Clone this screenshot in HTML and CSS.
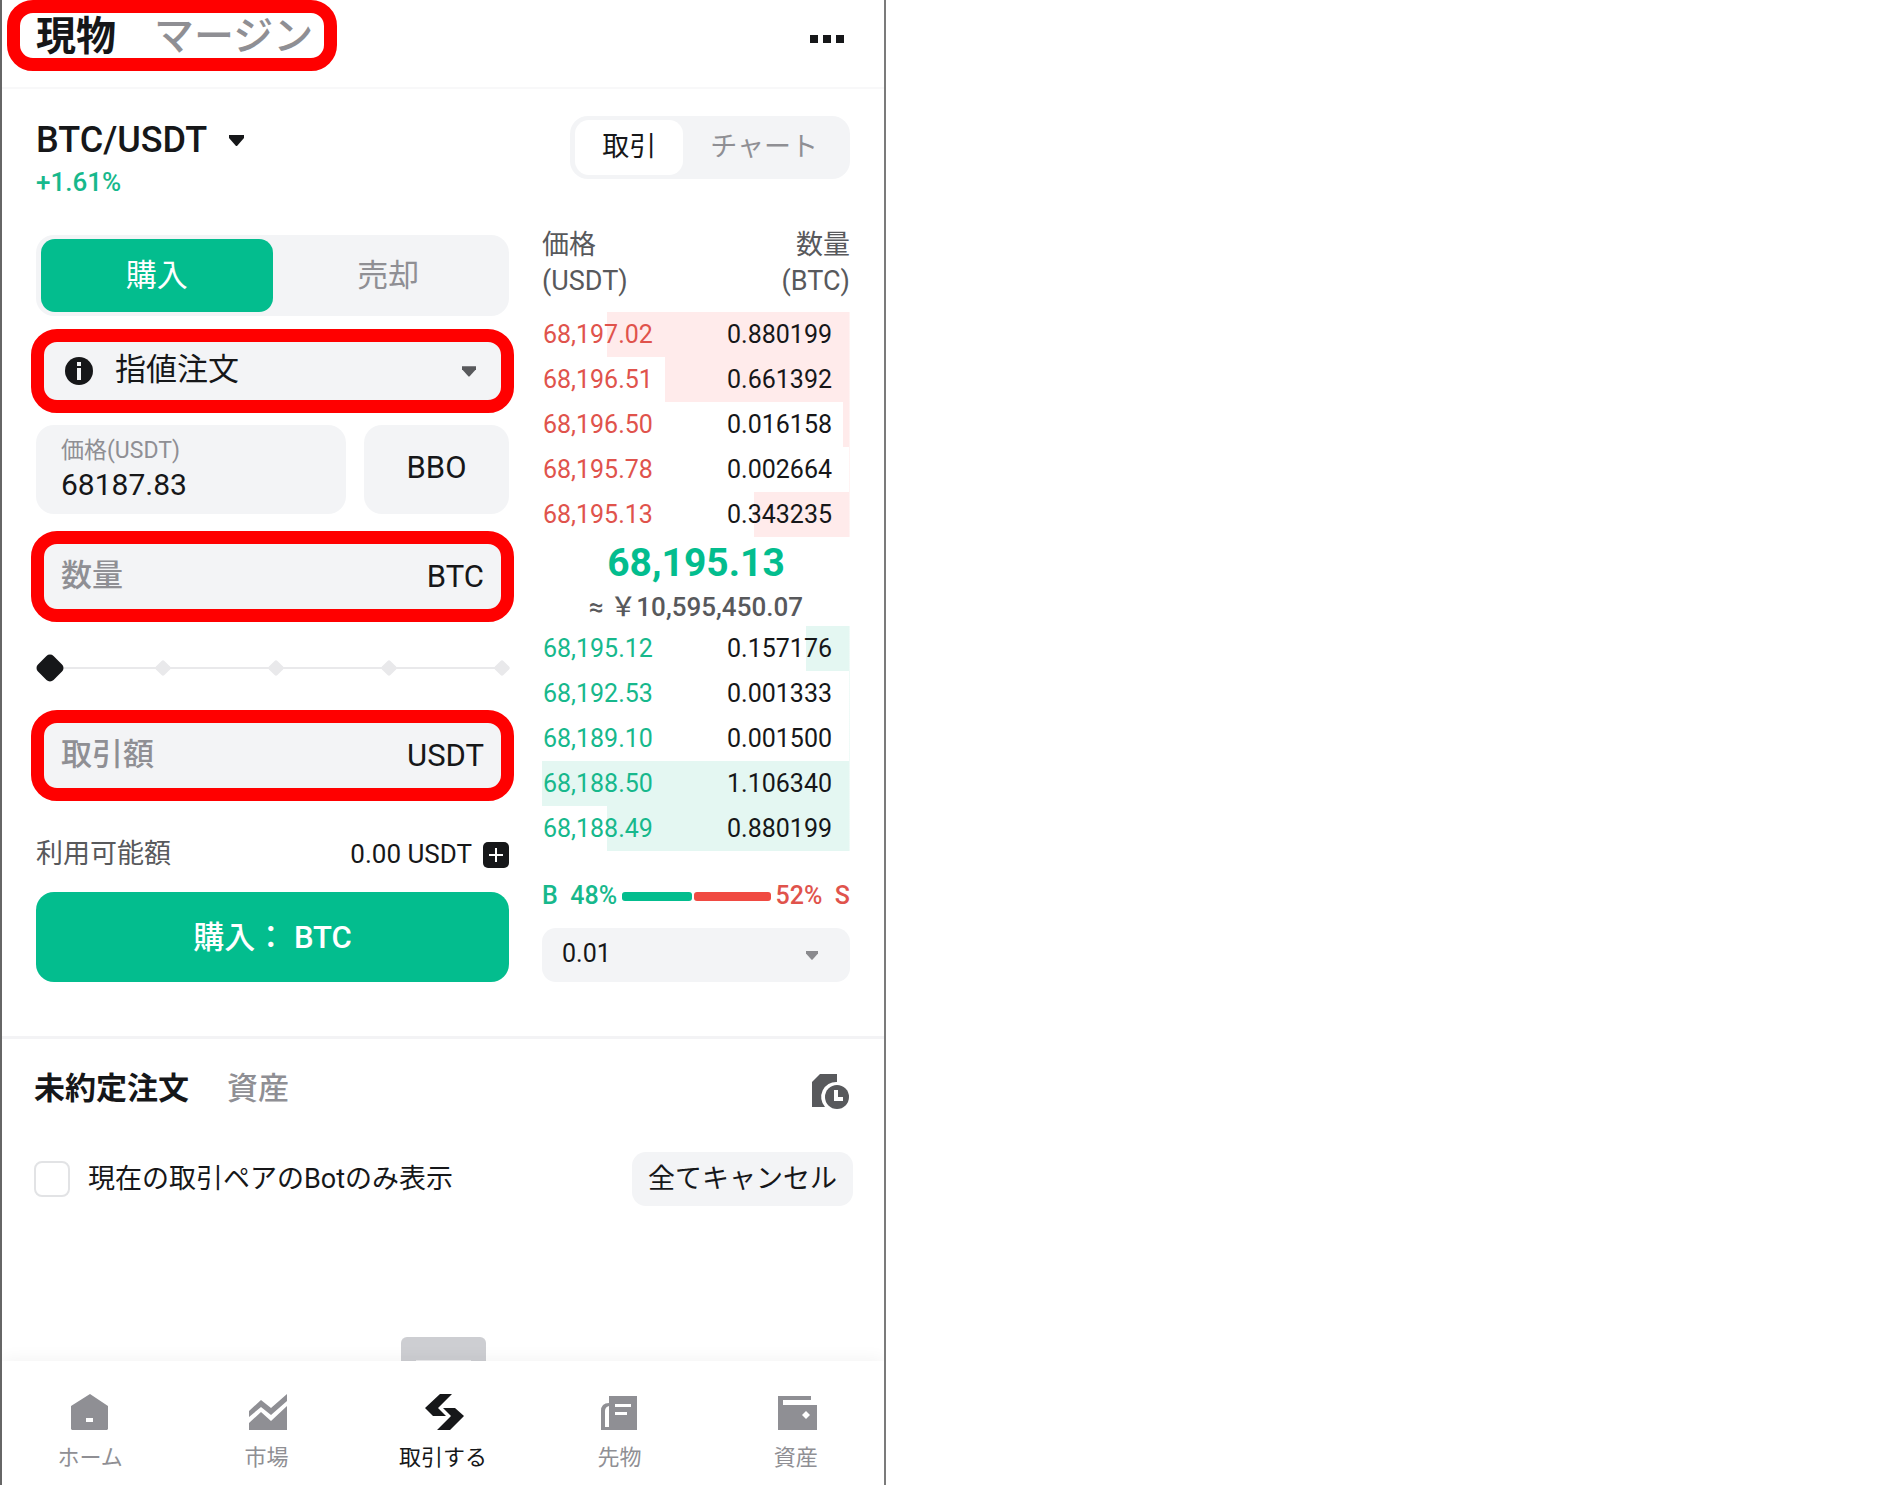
FILE: index.html
```
<!DOCTYPE html>
<html lang="ja">
<head>
    <meta charset="UTF-8">
    <meta name="viewport" content="width=device-width, initial-scale=1.0">
    <title>BTC/USDT 現物</title>
    <link rel="stylesheet" href="styles.css">
</head>
<body>
<div class="app">
    <header class="topbar">
        <div class="topbar-tabs highlight">
            <button class="tab active">現物</button>
            <button class="tab">マージン</button>
        </div>
        <button class="more" aria-label="メニュー"><i></i><i></i><i></i></button>
    </header>

    <main>
        <section class="trade">
            <div class="pair-row">
                <div>
                    <button class="pair">BTC/USDT
                        <svg class="caret" width="15" height="12" viewBox="0 0 15 12"><path d="M0 1h15v3L8 12H7L0 4z"/></svg>
                    </button>
                    <div class="change">+1.61%</div>
                </div>
                <div class="switch view-switch">
                    <button class="active">取引</button>
                    <button>チャート</button>
                </div>
            </div>

            <div class="columns">
                <form class="order" onsubmit="return false">
                    <div class="switch side-switch">
                        <button type="button" class="active">購入</button>
                        <button type="button">売却</button>
                    </div>

                    <div class="field order-type highlight">
                        <svg width="28" height="28" viewBox="0 0 28 28">
                            <circle cx="14" cy="14" r="14" fill="#161719"/>
                            <path d="M12 5h4v4h-4zM12 11h4v12h-4z" fill="#f3f4f6"/>
                        </svg>
                        <select aria-label="注文タイプ">
                            <option>指値注文</option>
                        </select>
                        <svg class="caret dark" width="14" height="12" viewBox="0 0 15 12"><path d="M0 1h15v3L8 12H7L0 4z"/></svg>
                    </div>

                    <div class="price-row">
                        <div class="price-box">
                            <label for="price">価格(USDT)</label>
                            <input id="price" type="text" value="68187.83">
                        </div>
                        <button type="button" class="bbo">BBO</button>
                    </div>

                    <div class="field amount highlight">
                        <input id="qty" type="text" placeholder="数量" aria-label="数量">
                        <label for="qty">BTC</label>
                    </div>

                    <div class="slider">
                        <div class="ticks"><i></i><i></i><i></i><i></i><i></i></div>
                        <input type="range" min="0" max="100" value="0" aria-label="割合">
                    </div>

                    <div class="field amount highlight">
                        <input id="total" type="text" placeholder="取引額" aria-label="取引額">
                        <label for="total">USDT</label>
                    </div>

                    <div class="available">
                        <span class="muted">利用可能額</span>
                        <span class="balance">0.00 USDT</span>
                        <button type="button" class="deposit" aria-label="入金">
                            <svg width="26" height="26" viewBox="0 0 26 26">
                                <rect width="26" height="26" rx="5" fill="#161719"/>
                                <path d="M13 6v14M6 13h14" stroke="#fff" stroke-width="2"/>
                            </svg>
                        </button>
                    </div>
                    <button class="submit">購入： BTC</button>
                </form>

                <div class="book">
                    <table>
                        <thead>
                            <tr><th>価格<br>(USDT)</th><th>数量<br>(BTC)</th></tr>
                        </thead>
                        <tbody class="asks">
                            <tr style="--depth: 79%"><td>68,197.02</td><td>0.880199</td></tr>
                            <tr style="--depth: 60%"><td>68,196.51</td><td>0.661392</td></tr>
                            <tr style="--depth: 2%"><td>68,196.50</td><td>0.016158</td></tr>
                            <tr style="--depth: 0.3%"><td>68,195.78</td><td>0.002664</td></tr>
                            <tr style="--depth: 31%"><td>68,195.13</td><td>0.343235</td></tr>
                        </tbody>
                        <tbody class="last">
                            <tr>
                                <td colspan="2">
                                    <div class="last-price">68,195.13</div>
                                    <div class="last-fiat">≈ ￥10,595,450.07</div>
                                </td>
                            </tr>
                        </tbody>
                        <tbody class="bids">
                            <tr style="--depth: 14%"><td>68,195.12</td><td>0.157176</td></tr>
                            <tr style="--depth: 0.3%"><td>68,192.53</td><td>0.001333</td></tr>
                            <tr style="--depth: 0.3%"><td>68,189.10</td><td>0.001500</td></tr>
                            <tr style="--depth: 100%"><td>68,188.50</td><td>1.106340</td></tr>
                            <tr style="--depth: 79%"><td>68,188.49</td><td>0.880199</td></tr>
                        </tbody>
                    </table>

                    <div class="ratio">
                        <span class="buy">B&nbsp; 48%</span>
                        <i class="bar buy-bar" style="flex-grow: 48"></i>
                        <i class="bar sell-bar" style="flex-grow: 52"></i>
                        <span class="sell">52%&nbsp; S</span>
                    </div>

                    <div class="step">
                        <select aria-label="価格単位">
                            <option>0.01</option>
                        </select>
                        <svg class="caret light" width="12" height="10" viewBox="0 0 15 12"><path d="M0 1h15v3L8 12H7L0 4z"/></svg>
                    </div>
                </div>
            </div>
        </section>

        <section class="orders">
            <div class="orders-tabs">
                <button class="tab active">未約定注文</button>
                <button class="tab">資産</button>
                <button class="history" aria-label="注文履歴">
                    <svg width="38" height="38" viewBox="0 0 38 38">
                        <path d="M9 2h17v8a15 15 0 0 0-12 25H1V10z" fill="#58595c"/>
                        <circle cx="26" cy="25" r="12" fill="#58595c"/>
                        <path d="M23 18h4v7h5v4h-9z" fill="#fff"/>
                    </svg>
                </button>
            </div>
            <div class="orders-filter">
                <input type="checkbox" id="onlyPair">
                <label for="onlyPair">現在の取引ペアのBotのみ表示</label>
                <button class="cancel-all">全てキャンセル</button>
            </div>
        </section>
    </main>

    <div class="empty"></div>

    <nav class="bottom-nav">
        <a href="#">
            <svg width="44" height="44" viewBox="0 0 44 44"><path fill-rule="evenodd" d="M22 4l18 12v23l-1 1H4l-1-1V16zM18 28v4h7v-4z"/></svg>
            ホーム
        </a>
        <a href="#">
            <svg width="44" height="44" viewBox="0 0 44 44"><path d="M4 21l12-11 10 8L42 4v7L26 25l-10-8L4 27z"/><path d="M4 33l12-11 10 9 16-15v24H4z"/></svg>
            市場
        </a>
        <a href="#" class="active">
            <svg width="44" height="44" viewBox="0 0 44 44"><path d="M19 4h12L17 18l8 8H12l-8-8z"/><path d="M22 18h12l9 8-14 14H16l14-14z"/></svg>
            取引する
        </a>
        <a href="#">
            <svg width="44" height="44" viewBox="0 0 44 44"><path fill-rule="evenodd" d="M12 6h28v34H4V21q0-8 8-8zM12 16q-4 1-4 5v16h4zM18 14v3h16v-3zM18 22v3h12v-3z"/></svg>
            先物
        </a>
        <a href="#">
            <svg width="44" height="44" viewBox="0 0 44 44"><path fill-rule="evenodd" d="M4 6h33v4H9v5h34v25H4zM32 21l-4 4 4 4 4-4z"/></svg>
            資産
        </a>
    </nav>
</div>
</body>
</html>
```
FILE: styles.css
```
* {
    box-sizing: border-box;
}

body {
    margin: 0;
    background: #fff;
    color: #161719;
    font-family: Roboto, "Noto Sans CJK JP", sans-serif;
    font-size: 27px;
}

button, input, select {
    font: inherit;
    color: inherit;
    background: none;
    border: none;
    padding: 0;
    margin: 0;
    outline: none;
}

button {
    cursor: pointer;
    white-space: nowrap;
}

select {
    appearance: none;
    flex: 1;
    min-width: 0;
}

svg {
    display: block;
    flex: none;
}

.app {
    display: flex;
    flex-direction: column;
    max-width: 886px;
    min-height: 100vh;
    border-left: 2px solid #666;
    border-right: 2px solid #7b7b7b;
    overflow: hidden;
}

/* red marker frame */
.highlight {
    border: 13px solid #f00;
    border-radius: 26px;
}

.caret { fill: #161719; }
.caret.dark { fill: #58595c; }
.caret.light { fill: #8a8a8e; }

.tab {
    color: #8f8f94;
    font-weight: 500;
}
.tab.active {
    color: #161719;
    font-weight: 700;
}

/* top bar */
.topbar {
    display: flex;
    justify-content: space-between;
    align-items: flex-start;
    height: 89px;
    padding: 0 40px 0 5px;
    border-bottom: 2px solid #f8f8f9;
}
.topbar-tabs {
    display: flex;
    align-items: center;
    gap: 38px;
    height: 71px;
    padding: 3px 11px 0 16px;
    font-size: 40px;
    line-height: 44px;
}
.more {
    display: flex;
    align-items: center;
    gap: 5px;
    height: 78px;
}
.more i {
    width: 8px;
    height: 8px;
    background: #161719;
}

/* pair and view switch */
.trade {
    padding: 27px 34px 54px;
    border-bottom: 3px solid #f3f3f5;
}
.pair-row {
    display: flex;
    justify-content: space-between;
    align-items: flex-start;
}
.pair {
    display: flex;
    align-items: center;
    gap: 22px;
    font-size: 36px;
    font-weight: 500;
    line-height: 48px;
}
.change {
    color: #17b88c;
    font-size: 26px;
    font-weight: 500;
    line-height: 36px;
}

.switch {
    display: flex;
    background: #f3f4f6;
    border-radius: 18px;
    padding: 4px 5px;
}
.switch button {
    flex: 1 1 auto;
    padding-bottom: 6px;
    color: #8f8f94;
    border-radius: 14px;
}
.view-switch {
    height: 63px;
}
.view-switch button {
    padding: 0 27px 6px;
}
.view-switch .active {
    color: #161719;
    background: #fff;
}
.side-switch {
    height: 81px;
    font-size: 31px;
}
.side-switch .active {
    color: #fff;
    background: #03bd8e;
}

.columns {
    display: grid;
    grid-template-columns: 1fr 308px;
    gap: 33px;
    margin-top: 27px;
}

/* order form */
.order {
    display: flex;
    flex-direction: column;
    min-width: 0;
    padding-top: 8px;
}
.field {
    display: flex;
    align-items: center;
    margin: 0 -5px;
    background: #f3f4f6;
    font-size: 31px;
}
.order-type {
    height: 84px;
    margin-top: 13px;
    padding: 0 25px 0 21px;
    gap: 22px;
}
.order-type select {
    height: 48px;
    padding-bottom: 4px;
}

.price-row {
    display: flex;
    gap: 18px;
    height: 89px;
    margin: 12px 0 17px;
}
.price-box {
    flex: 1;
    min-width: 0;
    padding: 10px 25px;
    background: #f3f4f6;
    border-radius: 18px;
}
.price-box label {
    display: block;
    color: #8f8f94;
    font-size: 23px;
    line-height: 32px;
}
.price-box input {
    display: block;
    width: 100%;
    font-size: 30px;
    line-height: 36px;
}
.bbo {
    width: 145px;
    padding-bottom: 4px;
    background: #f3f4f6;
    border-radius: 18px;
    font-size: 31px;
}

.amount {
    height: 91px;
    padding: 0 17px;
}
.amount input {
    flex: 1;
    min-width: 0;
    height: 48px;
    padding-bottom: 2px;
}
.amount input::placeholder {
    color: #8f8f94;
    font-weight: 500;
}

.slider {
    display: grid;
    align-items: center;
    height: 28px;
    margin: 32px 0 28px;
}
.slider > * {
    grid-area: 1 / 1;
}
.ticks {
    display: flex;
    justify-content: space-between;
    padding: 0 1px 0 8px;
    background: linear-gradient(#e9e9eb, #e9e9eb) center / calc(100% - 16px) 2px no-repeat;
}
.ticks i {
    width: 12px;
    height: 12px;
    border-radius: 2px;
    background: #e9e9eb;
    transform: rotate(45deg);
}
.slider input {
    appearance: none;
    margin: 0 3px;
}
.slider input::-webkit-slider-thumb {
    appearance: none;
    width: 22px;
    height: 22px;
    border-radius: 5px;
    background: #161719;
    transform: rotate(45deg);
}

.available {
    display: flex;
    align-items: center;
    height: 36px;
    margin: 36px 0 19px;
    line-height: 36px;
}
.muted {
    padding-bottom: 2px;
    color: #58595c;
}
.balance {
    margin: 0 11px 0 auto;
    padding-bottom: 2px;
    font-size: 26px;
}
.submit {
    height: 90px;
    padding-bottom: 5px;
    background: #03bd8e;
    border-radius: 18px;
    color: #fff;
    font-size: 31px;
    font-weight: 500;
}

/* order book */
.book table {
    width: 100%;
    border-collapse: collapse;
}
.book th {
    padding: 0 0 13px;
    color: #58595c;
    font-weight: 400;
    line-height: 36px;
    text-align: left;
}
.book td {
    height: 45px;
    padding: 0 0 0 1px;
    font-size: 25px;
    line-height: 45px;
    vertical-align: top;
}
.book th:last-child,
.book td:last-child {
    text-align: right;
}
.book td:last-child {
    padding-right: 18px;
}
.asks tr {
    background: linear-gradient(to left, #ffebeb var(--depth), transparent 0);
}
.asks td:first-child { color: #e0534c; }
.bids tr {
    background: linear-gradient(to left, #e4f7f2 var(--depth), transparent 0);
}
.bids td:first-child { color: #17b88c; }

.book .last td {
    padding: 1px 0 0;
    text-align: center;
}
.last-price {
    color: #03bd8e;
    font-size: 39px;
    font-weight: 700;
    line-height: 50px;
}
.last-fiat {
    color: #58595c;
    font-size: 26px;
    font-weight: 500;
    line-height: 38px;
}

.ratio {
    display: flex;
    align-items: center;
    margin: 27px 0 14px;
    font-size: 25px;
    font-weight: 500;
    line-height: 36px;
}
.buy { color: #17b88c; margin-right: 5px; }
.sell { color: #e0534c; margin-left: 5px; }
.bar {
    height: 9px;
    border-radius: 3px;
}
.buy-bar {
    background: #03bd8e;
    margin-right: 2px;
}
.sell-bar { background: #f04a42; }

.step {
    display: flex;
    align-items: center;
    height: 54px;
    padding: 0 32px 0 20px;
    background: #f3f4f6;
    border-radius: 14px;
}
.step select {
    height: 48px;
    padding-bottom: 4px;
    font-size: 25px;
}

/* open orders */
.orders {
    padding: 28px 31px 0 32px;
}
.orders-tabs {
    display: flex;
    align-items: center;
    gap: 38px;
    padding-right: 4px;
    font-size: 31px;
    line-height: 44px;
}
.history {
    margin-left: auto;
    padding-top: 4px;
}
.orders-filter {
    display: flex;
    align-items: center;
    margin-top: 41px;
}
.orders-filter label {
    padding-bottom: 5px;
}
.orders-filter input {
    appearance: none;
    width: 36px;
    height: 36px;
    margin-right: 18px;
    border: 2px solid #e2e3e5;
    border-radius: 8px;
}
.cancel-all {
    height: 54px;
    margin-left: auto;
    padding: 0 16px 5px;
    background: #f3f4f6;
    border-radius: 14px;
}

/* top edge of the empty-list picture */
.empty {
    width: 85px;
    height: 24px;
    margin: auto auto 0;
    background: linear-gradient(#ececee, #ececee) bottom / 55px 1px no-repeat #cdced2;
    border-radius: 6px 6px 0 0;
}

.bottom-nav {
    display: grid;
    grid-template-columns: repeat(5, 1fr);
    height: 124px;
    padding-top: 29px;
    background: #fff;
    box-shadow: 0 -2px 16px rgba(0, 0, 0, 0.05);
}
.bottom-nav a {
    display: flex;
    flex-direction: column;
    align-items: center;
    gap: 8px;
    color: #8f8f94;
    font-size: 22px;
    line-height: 32px;
    text-decoration: none;
}
.bottom-nav svg {
    fill: currentColor;
}
.bottom-nav .active {
    color: #161719;
}
```
